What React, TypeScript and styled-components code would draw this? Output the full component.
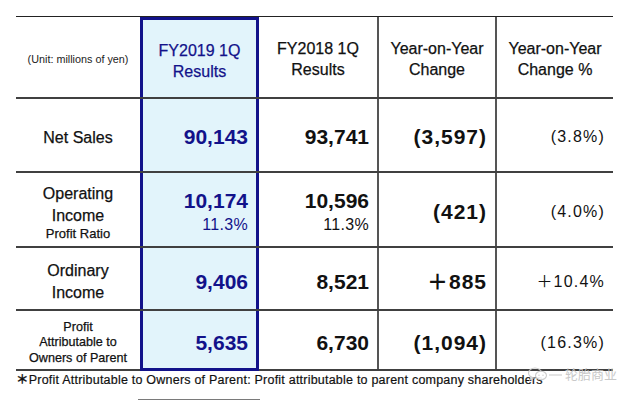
import React from "react";
import styled, { createGlobalStyle } from "styled-components";

const GlobalStyle = createGlobalStyle`
  html, body { margin: 0; padding: 0; background: #ffffff; }
  body { font-family: "Liberation Sans", Arial, "Noto Sans CJK JP", sans-serif; color: #111; }
  * { box-sizing: border-box; }
`;

const NAVY = "#12128a";
const LINE = "#404040";

const Page = styled.div`
  position: relative;
  width: 640px;
  height: 402px;
  overflow: hidden;
  padding: 16px 0 0 16px;
`;

const Table = styled.div`
  width: 597px;
  border-top: 1px solid #222;
`;

const Row = styled.div<{ $h: number }>`
  display: grid;
  grid-template-columns: 124px 119px 118px 118px 118px;
  height: ${(p) => p.$h}px;
  border-bottom: 2px solid ${LINE};
`;

const Cell = styled.div<{
  $hl?: boolean;
  $first?: boolean;
  $last?: boolean;
  $rule?: boolean;
  $align?: "center" | "end";
  $pt?: number;
}>`
  display: flex;
  flex-direction: column;
  justify-content: center;
  align-items: ${(p) => (p.$align === "end" ? "flex-end" : "center")};
  text-align: ${(p) => (p.$align === "end" ? "right" : "center")};
  padding-top: ${(p) => p.$pt ?? 4}px;
  padding-right: ${(p) => (p.$align === "end" ? 8 : 0)}px;
  background: ${(p) => (p.$hl ? "#e2f4fb" : "transparent")};
  border-left: ${(p) =>
    p.$hl ? `3px solid ${NAVY}` : p.$rule ? `2px solid #555` : "none"};
  border-right: ${(p) => (p.$hl ? `3px solid ${NAVY}` : "none")};
  border-top: ${(p) => (p.$hl && p.$first ? `3px solid ${NAVY}` : "none")};
  border-bottom: ${(p) => (p.$hl && p.$last ? `3px solid ${NAVY}` : "none")};
  margin-bottom: ${(p) => (p.$hl && p.$last ? -2 : 0)}px;
`;

const Unit = styled.div`
  font-size: 10.8px;
  line-height: 14px;
  color: #222;
`;

const HeadText = styled.div<{ $blue?: boolean }>`
  font-size: 16px;
  line-height: 21px;
  color: ${(p) => (p.$blue ? NAVY : "#111")};
  -webkit-text-stroke: 0.25px ${(p) => (p.$blue ? NAVY : "#111")};
`;

const Label = styled.div<{ $size: number; $lh: number }>`
  font-size: ${(p) => p.$size}px;
  line-height: ${(p) => p.$lh}px;
  color: #111;
  white-space: nowrap;
  -webkit-text-stroke: 0.25px #111;
`;

const Big = styled.div<{ $blue?: boolean; $spaced?: boolean }>`
  font-weight: 700;
  font-size: 21px;
  line-height: 24px;
  white-space: nowrap;
  color: ${(p) => (p.$blue ? NAVY : "#111")};
  letter-spacing: ${(p) => (p.$spaced ? "1px" : "0")};
`;

const Ratio = styled.div<{ $blue?: boolean }>`
  font-size: 16px;
  line-height: 18px;
  margin-top: 3px;
  letter-spacing: 0.3px;
  color: ${(p) => (p.$blue ? NAVY : "#111")};
`;

const Pct = styled.div`
  font-size: 16px;
  line-height: 18px;
  letter-spacing: 1.2px;
  color: #111;
  white-space: nowrap;
`;

const Footnote = styled.div`
  font-size: 12.5px;
  line-height: 18px;
  letter-spacing: 0.22px;
  color: #111;
  white-space: nowrap;
  -webkit-text-stroke: 0.2px #111;
`;

const Star = styled.span`
  font-weight: 700;
`;

const NextBox = styled.div`
  margin: 10px 0 0 122px;
  width: 122px;
  height: 4px;
  border-top: 1px solid #7a7a7a;
`;

const Watermark = styled.div`
  position: absolute;
  left: 527px;
  top: 366px;
  display: flex;
  align-items: center;
  gap: 2px;
  color: #c4c4c4;
  font-family: "Noto Sans CJK SC", sans-serif;
  font-size: 13px;
  line-height: 16px;
  opacity: 0.9;
`;

const WeChatIcon = () => (
  <svg width="36" height="16" viewBox="0 0 36 16" fill="none" stroke="#c8c8c8" strokeWidth="1.1">
    <ellipse cx="8" cy="7" rx="6.5" ry="5" />
    <path d="M4 11.5 L3 14 L6.5 12" />
    <ellipse cx="14" cy="9.5" rx="5.5" ry="4.2" fill="#fff" />
    <circle cx="12" cy="9.3" r="0.7" fill="#c8c8c8" stroke="none" />
    <circle cx="16" cy="9.3" r="0.7" fill="#c8c8c8" stroke="none" />
    <path d="M22 9 H35" />
  </svg>
);

type RowData = {
  h: number;
  pt: number;
  label: React.ReactNode;
  fy19: React.ReactNode;
  fy18: React.ReactNode;
  yoy: React.ReactNode;
  pct: string;
  last?: boolean;
};

const rows: RowData[] = [
  {
    h: 74,
    pt: 4,
    label: <Label $size={16} $lh={21}>Net Sales</Label>,
    fy19: <Big $blue>90,143</Big>,
    fy18: <Big>93,741</Big>,
    yoy: <Big $spaced>(3,597)</Big>,
    pct: "(3.8%)",
  },
  {
    h: 75,
    pt: 4,
    label: (
      <>
        <Label $size={16} $lh={22}>Operating</Label>
        <Label $size={16} $lh={22}>Income</Label>
        <Label $size={13} $lh={14}>Profit Ratio</Label>
      </>
    ),
    fy19: (
      <>
        <Big $blue>10,174</Big>
        <Ratio $blue>11.3%</Ratio>
      </>
    ),
    fy18: (
      <>
        <Big>10,596</Big>
        <Ratio>11.3%</Ratio>
      </>
    ),
    yoy: <Big $spaced>(421)</Big>,
    pct: "(4.0%)",
  },
  {
    h: 63,
    pt: 6,
    label: (
      <>
        <Label $size={16} $lh={22}>Ordinary</Label>
        <Label $size={16} $lh={22}>Income</Label>
      </>
    ),
    fy19: <Big $blue>9,406</Big>,
    fy18: <Big>8,521</Big>,
    yoy: <Big $spaced>＋885</Big>,
    pct: "＋10.4%",
  },
  {
    h: 60,
    pt: 6,
    last: true,
    label: (
      <>
        <Label $size={12.6} $lh={15.5}>Profit</Label>
        <Label $size={12.6} $lh={15.5}>Attributable to</Label>
        <Label $size={12.6} $lh={15.5}>Owners of Parent</Label>
      </>
    ),
    fy19: <Big $blue>5,635</Big>,
    fy18: <Big>6,730</Big>,
    yoy: <Big $spaced>(1,094)</Big>,
    pct: "(16.3%)",
  },
];

export default function App() {
  return (
    <>
      <GlobalStyle />
      <Page>
        <Table>
          <Row $h={82}>
            <Cell>
              <Unit>(Unit: millions of yen)</Unit>
            </Cell>
            <Cell $hl $first>
              <HeadText $blue>FY2019 1Q</HeadText>
              <HeadText $blue>Results</HeadText>
            </Cell>
            <Cell>
              <HeadText>FY2018 1Q</HeadText>
              <HeadText>Results</HeadText>
            </Cell>
            <Cell $rule>
              <HeadText>Year-on-Year</HeadText>
              <HeadText>Change</HeadText>
            </Cell>
            <Cell $rule>
              <HeadText>Year-on-Year</HeadText>
              <HeadText>Change %</HeadText>
            </Cell>
          </Row>
          {rows.map((r, i) => (
            <Row key={i} $h={r.h}>
              <Cell $pt={r.pt}>{r.label}</Cell>
              <Cell $hl $last={r.last} $align="end" $pt={r.pt}>
                {r.fy19}
              </Cell>
              <Cell $align="end" $pt={r.pt}>
                {r.fy18}
              </Cell>
              <Cell $rule $align="end" $pt={r.pt}>
                {r.yoy}
              </Cell>
              <Cell $rule $align="end" $pt={r.pt}>
                <Pct>{r.pct}</Pct>
              </Cell>
            </Row>
          ))}
        </Table>
        <Footnote>
          <Star>＊</Star>Profit Attributable to Owners of Parent: Profit attributable to parent company shareholders
        </Footnote>
        <NextBox />
        <Watermark>
          <WeChatIcon />
          <span>轮胎商业</span>
        </Watermark>
      </Page>
    </>
  );
}
